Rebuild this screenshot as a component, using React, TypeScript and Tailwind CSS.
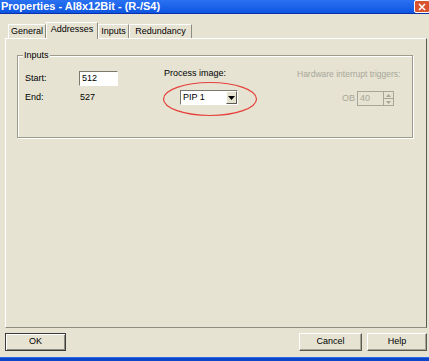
import React from "react";

const face = "bg-[#E6E3D3]";

const Button = ({ label, def }: { label: string; def?: boolean }) => (
  <div
    className={`h-[18px] flex items-center justify-center text-[9px] text-black ${face} ${
      def
        ? "border border-[#3c3c3c] shadow-[inset_1px_1px_0_#fff,inset_-1px_-1px_0_#8e8c80]"
        : "border-t border-l border-white border-r border-b border-r-[#5a5a50] border-b-[#5a5a50] shadow-[inset_-1px_-1px_0_#a6a495]"
    }`}
  >
    {label}
  </div>
);

const Tab = ({ label, w, active }: { label: string; w: string; active?: boolean }) => (
  <div
    className={`${w} flex items-center justify-center text-[9px] text-black border-t border-l border-white border-r border-r-[#8e8c80] ${face} ${
      active ? "h-[17px] -mb-[1px] relative z-10 pb-[2px]" : "h-[14px]"
    }`}
  >
    {label}
  </div>
);

const Arrow = () => (
  <svg width="7" height="4" viewBox="0 0 7 4">
    <polygon points="0,0 7,0 3.5,4" fill="#000" />
  </svg>
);

export default function App() {
  return (
    <div
      className={`relative w-[429px] h-[361px] ${face} flex flex-col overflow-hidden font-['Liberation_Sans',Arial,sans-serif]`}
    >
      {/* title bar */}
      <div className="h-[14px] flex items-center justify-between bg-gradient-to-b from-[#2a72f2] to-[#0c55e0] border-b border-[#0a2fa8]">
        <span className="pl-[1px] text-[11px] leading-[13px] font-bold text-white">
          Properties - AI8x12Bit - (R-/S4)
        </span>
        <div className="w-[16px] h-[13px] -mr-[1px] rounded-[2px] border border-white bg-[#d9532f] flex items-center justify-center">
          <svg width="8" height="8" viewBox="0 0 8 8">
            <path d="M1 1L7 7M7 1L1 7" stroke="#fff" strokeWidth="1.6" />
          </svg>
        </div>
      </div>

      <div className="flex-1 flex flex-col pl-[5px] pr-[2px] pt-[8px] pb-[6px]">
        {/* tabs */}
        <div className="h-[16px] flex items-end pl-[3px]">
          <Tab label="General" w="w-[38px]" />
          <Tab label="Addresses" w="w-[52px]" active />
          <Tab label="Inputs" w="w-[31px]" />
          <Tab label="Redundancy" w="w-[63px]" />
        </div>

        {/* tab panel */}
        <div className="flex-1 border-t border-l border-white border-r border-b border-r-[#5a5a50] border-b-[#8e8c80] pt-[16px] pl-[11px] pr-[13px]">
          <div className="relative h-[83px] border border-[#9d9b8b] shadow-[inset_1px_1px_0_#fff,1px_1px_0_#fff]">
            <span className={`absolute -top-[7px] left-[5px] px-[1px] text-[9px] leading-[12px] text-black ${face}`}>
              Inputs
            </span>
            <div className="flex pt-[15px] pl-[7px] text-[9px] text-black">
              {/* start / end */}
              <div className="w-[139px] flex flex-col gap-[4px]">
                <div className="h-[15px] flex items-center">
                  <span className="w-[54px]">Start:</span>
                  <div className="w-[39px] h-[15px] bg-white border-t border-l border-[#7a786c] border-r border-b border-r-white border-b-white flex items-center pl-[2px]">
                    512
                  </div>
                </div>
                <div className="h-[15px] flex items-center">
                  <span className="w-[55px]">End:</span>
                  <span>527</span>
                </div>
              </div>

              {/* process image */}
              <div className="w-[133px] flex flex-col">
                <span className="-mt-[4px] h-[12px] leading-[12px]">Process image:</span>
                <div className="mt-[11px] ml-[16px] w-[58px] h-[15px] bg-white border-t border-l border-[#7a786c] border-r border-b border-r-white border-b-white flex items-center">
                  <span className="flex-1 pl-[2px]">PIP 1</span>
                  <div className={`w-[11px] h-[13px] ${face} border-t border-l border-white border-r border-b border-r-[#5a5a50] border-b-[#5a5a50] flex items-center justify-center`}>
                    <Arrow />
                  </div>
                </div>
              </div>

              {/* hardware interrupt */}
              <div className="flex flex-col text-[#a8a698]">
                <span className="-mt-[3px] h-[12px] leading-[12px] text-[8.5px]">Hardware interrupt triggers:</span>
                <div className="mt-[11px] flex items-center">
                  <span className="ml-[45px] w-[15px]">OB</span>
                  <div className="w-[37px] h-[15px] border border-[#a8a698] flex items-center">
                    <span className="flex-1 pl-[2px]">40</span>
                    <div className="w-[10px] h-full flex flex-col border-l border-[#a8a698]">
                      <div className="flex-1 flex items-center justify-center border-b border-[#a8a698]">
                        <svg width="5" height="3" viewBox="0 0 5 3">
                          <polygon points="0,3 5,3 2.5,0" fill="#a8a698" />
                        </svg>
                      </div>
                      <div className="flex-1 flex items-center justify-center">
                        <svg width="5" height="3" viewBox="0 0 5 3">
                          <polygon points="0,0 5,0 2.5,3" fill="#a8a698" />
                        </svg>
                      </div>
                    </div>
                  </div>
                </div>
              </div>
            </div>
          </div>
        </div>

        {/* buttons */}
        <div className="mt-[5px] flex items-center">
          <div className="w-[61px]">
            <Button label="OK" def />
          </div>
          <div className="flex-1" />
          <div className="w-[63px]">
            <Button label="Cancel" />
          </div>
          <div className="w-[60px] ml-[5px]">
            <Button label="Help" />
          </div>
        </div>
      </div>

      {/* bottom frame */}
      <div className="h-[4px] bg-[#0b45c8] border-t border-[#2d6be8]" />

      {/* red annotation */}
      <svg className="absolute left-[162px] top-[81px]" width="96" height="37" viewBox="0 0 96 37">
        <ellipse cx="48" cy="18" rx="46.5" ry="16.5" fill="none" stroke="#e5403a" strokeWidth="1.2" />
      </svg>
    </div>
  );
}
